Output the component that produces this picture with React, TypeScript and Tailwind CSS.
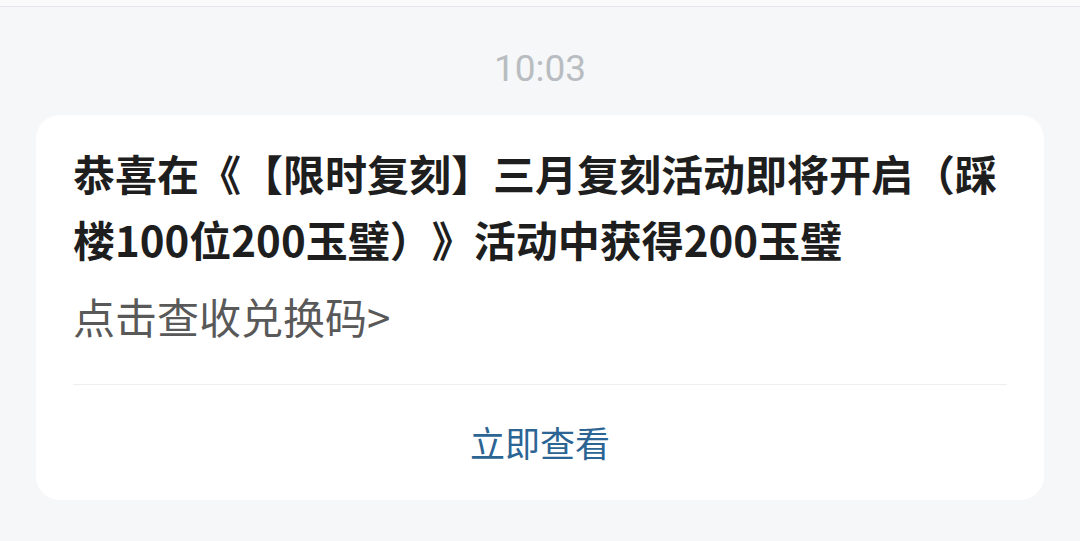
export default function App() {
  return (
    <div
      className="w-[1080px] h-[541px] bg-[#f6f7f9] overflow-hidden flex flex-col [text-spacing-trim:space-all]"
      style={{ fontFamily: '"Noto Sans CJK SC", "Noto Sans", sans-serif' }}
    >
      <div className="h-[7px] shrink-0 bg-[#fafafa] border-b border-[#e3e5e8]" />
      <div
        className="mt-[41px] h-[40px] flex items-center justify-center text-[37px] text-[#b9bdc1] leading-none"
        style={{ fontFamily: 'Roboto, "Noto Sans", sans-serif' }}
      >
        10:03
      </div>
      <div className="mt-[27px] mx-[36px] w-[1008px] h-[385px] bg-white rounded-[24px] flex flex-col">
        <div className="px-[37px] pt-[25px]">
          <div className="text-[42px] leading-[66px] font-bold text-[#1e1e1e] [text-spacing-trim:space-all]">
            恭喜在《【限时复刻】三月复刻活动即将开启（踩楼100位200玉璧）》活动中获得200玉璧
          </div>
          <div className="mt-[16px] text-[42px] leading-[56px] text-[#595959]">
            点击查收兑换码&gt;
          </div>
          <div className="mt-[40px] h-[1px] bg-[#eeeeee]" />
        </div>
        <div className="flex-1 flex items-center justify-center text-[35px] text-[#2c6594]">
          立即查看
        </div>
      </div>
    </div>
  );
}
